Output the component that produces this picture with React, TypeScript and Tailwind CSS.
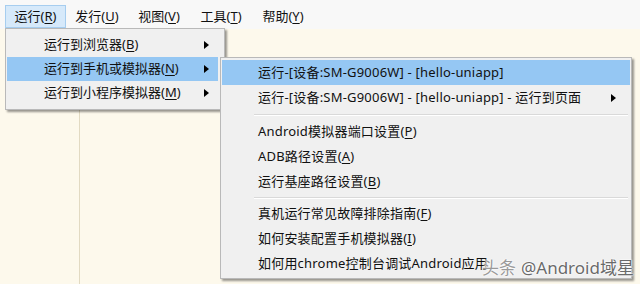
import React from 'react'

const font = { fontFamily: '"Noto Sans", "Noto Sans CJK SC", sans-serif' }

type Item = { label: string; key?: string; arrow?: boolean; active?: boolean }

const Arrow = () => (
  <svg width="5" height="8" viewBox="0 0 5 8" className="shrink-0">
    <polygon points="0,0 5,4 0,8" fill="#000" />
  </svg>
)

const Label = ({ label, k }: { label: string; k?: string }) => (
  <span className="whitespace-nowrap">
    {label}
    {k && (
      <>
        (<span className="underline underline-offset-2">{k}</span>)
      </>
    )}
  </span>
)

const topMenu = [
  { label: '运行', key: 'R', open: true },
  { label: '发行', key: 'U' },
  { label: '视图', key: 'V' },
  { label: '工具', key: 'T' },
  { label: '帮助', key: 'Y' },
]

const runMenu: Item[] = [
  { label: '运行到浏览器', key: 'B', arrow: true },
  { label: '运行到手机或模拟器', key: 'N', arrow: true, active: true },
  { label: '运行到小程序模拟器', key: 'M', arrow: true },
]

const phoneMenu: (Item | 'sep1' | 'sep2')[] = [
  { label: '运行-[设备:SM-G9006W] - [hello-uniapp]', active: true },
  { label: '运行-[设备:SM-G9006W] - [hello-uniapp] - 运行到页面', arrow: true },
  'sep1',
  { label: 'Android模拟器端口设置', key: 'P' },
  { label: 'ADB路径设置', key: 'A' },
  { label: '运行基座路径设置', key: 'B' },
  'sep2',
  { label: '真机运行常见故障排除指南', key: 'F' },
  { label: '如何安装配置手机模拟器', key: 'I' },
  { label: '如何用chrome控制台调试Android应用' },
]

export default function App() {
  return (
    <div className="relative w-[640px] h-[284px] overflow-hidden bg-[#fdf9ec] text-[13px] text-[#111]" style={font}>
      {/* menu bar */}
      <div className="flex h-[29px] items-start bg-[#f8f8f8] pl-[5px] pt-[5px]">
        {topMenu.map((m) => (
          <div
            key={m.key}
            className={
              m.open
                ? 'flex h-[23px] w-[61px] items-center justify-center border border-[#a6cdef] bg-[#d6e9fa]'
                : 'flex h-[23px] w-[62px] items-center justify-center border border-transparent'
            }
          >
            <Label label={m.label} k={m.key} />
          </div>
        ))}
      </div>

      {/* editor area */}
      <div className="flex h-[255px]">
        <div className="w-[80px] border-r border-[#e2dac2]" />
        <div className="flex-1" />
      </div>

      {/* first dropdown */}
      <div className="absolute left-[5px] top-[28px] w-[220px] border border-[#b9b9b9] bg-[#f0f0f0] py-[4px] pl-[1px] pr-[6px] shadow-[2px_2px_2px_rgba(0,0,0,0.4)]">
        {runMenu.map((it) => (
          <div
            key={it.label}
            className={`flex h-[24px] items-center pl-[37px] pr-[9px] ${it.active ? 'bg-[#95c7f3]' : ''}`}
          >
            <Label label={it.label} k={it.key} />
            <div className="flex-1" />
            {it.arrow && <Arrow />}
          </div>
        ))}
      </div>

      {/* submenu */}
      <div className="absolute left-[220px] top-[57px] w-[412px] border border-[#b9b9b9] bg-[#f0f0f0] px-[1px] py-[2px] tracking-[0.2px] shadow-[2px_2px_2px_rgba(0,0,0,0.4)]">
        {phoneMenu.map((it, i) => {
          if (it === 'sep1' || it === 'sep2') {
            return (
              <div key={i} className={`flex items-center pl-[32px] pr-[2px] ${it === 'sep1' ? 'h-[9px]' : 'h-[7px]'}`}>
                <div className="h-[2px] flex-1 border-t border-b border-t-[#d9d9d9] border-b-white" />
              </div>
            )
          }
          return (
            <div
              key={i}
              className={`flex h-[25px] items-center pl-[36px] pr-[14px] ${it.active ? 'bg-[#95c7f3]' : ''}`}
            >
              <Label label={it.label} k={it.key} />
              <div className="flex-1" />
              {it.arrow && <Arrow />}
            </div>
          )
        })}
      </div>

      {/* watermark */}
      <div
        className="absolute left-[482px] top-[259px] flex items-center gap-[5px] whitespace-nowrap text-[17px] leading-none"
        style={{ textShadow: '0 0 2px #fff, 0 0 2px #fff, 0 0 1px #fff' }}
      >
        <span className="text-[#9a9a9a]">头条</span>
        <span className="text-[#6a6a6a]">@Android域星</span>
      </div>
    </div>
  )
}
